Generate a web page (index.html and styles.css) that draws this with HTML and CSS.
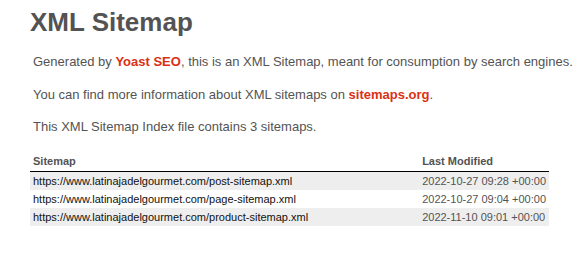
FILE: index.html
```html
<!DOCTYPE html>
<html>
<head>
<meta charset="utf-8">
<link rel="stylesheet" href="styles.css">
</head>
<body>
<div class="content">
  <h1 class="title">XML Sitemap</h1>
  <p class="expl">Generated by <a href="#">Yoast SEO</a>, this is an XML Sitemap, meant for consumption by search engines.</p>
  <p class="expl">You can find more information about XML sitemaps on <a href="#">sitemaps.org</a>.</p>
  <p class="expl">This XML Sitemap Index file contains 3 sitemaps.</p>
  <table class="sitemap">
    <thead>
      <tr><th class="col-loc">Sitemap</th><th class="col-mod">Last Modified</th></tr>
    </thead>
    <tbody>
      <tr><td><a class="loc" href="#">https://www.latinajadelgourmet.com/post-sitemap.xml</a></td><td>2022-10-27 09:28 +00:00</td></tr>
      <tr><td><a class="loc" href="#">https://www.latinajadelgourmet.com/page-sitemap.xml</a></td><td>2022-10-27 09:04 +00:00</td></tr>
      <tr><td><a class="loc" href="#">https://www.latinajadelgourmet.com/product-sitemap.xml</a></td><td>2022-11-10 09:01 +00:00</td></tr>
    </tbody>
  </table>
</div>
</body>
</html>
```
FILE: styles.css
```css
html, body {
  margin: 0;
  padding: 0;
  background: #fff;
}
body {
  font-family: "Liberation Sans", Arial, Helvetica, sans-serif;
  font-size: 13px;
  color: #545353;
}
.content {
  padding: 0 0 0 30px;
}
.title {
  font-size: 26px;
  font-weight: bold;
  margin: 0;
  padding-top: 7px;
  line-height: 30px;
}
.expl {
  margin: 17px 3px;
  line-height: 1.2em;
}
.expl a {
  color: #da3114;
  font-weight: bold;
  text-decoration: none;
}
.sitemap {
  border: none;
  border-collapse: collapse;
  width: 519px;
}
.sitemap th {
  text-align: left;
  font-size: 11px;
  font-weight: bold;
  padding: 3px 3px 4px;
  border-bottom: 1px solid #000;
  white-space: nowrap;
}
.sitemap td {
  font-size: 11px;
  padding: 3px;
  line-height: 12px;
  white-space: nowrap;
}
.sitemap tbody tr:nth-child(odd) td {
  background-color: #eee;
}
.col-mod {
  width: 120px;
}
.loc {
  color: #111;
  text-decoration: none;
}
```
